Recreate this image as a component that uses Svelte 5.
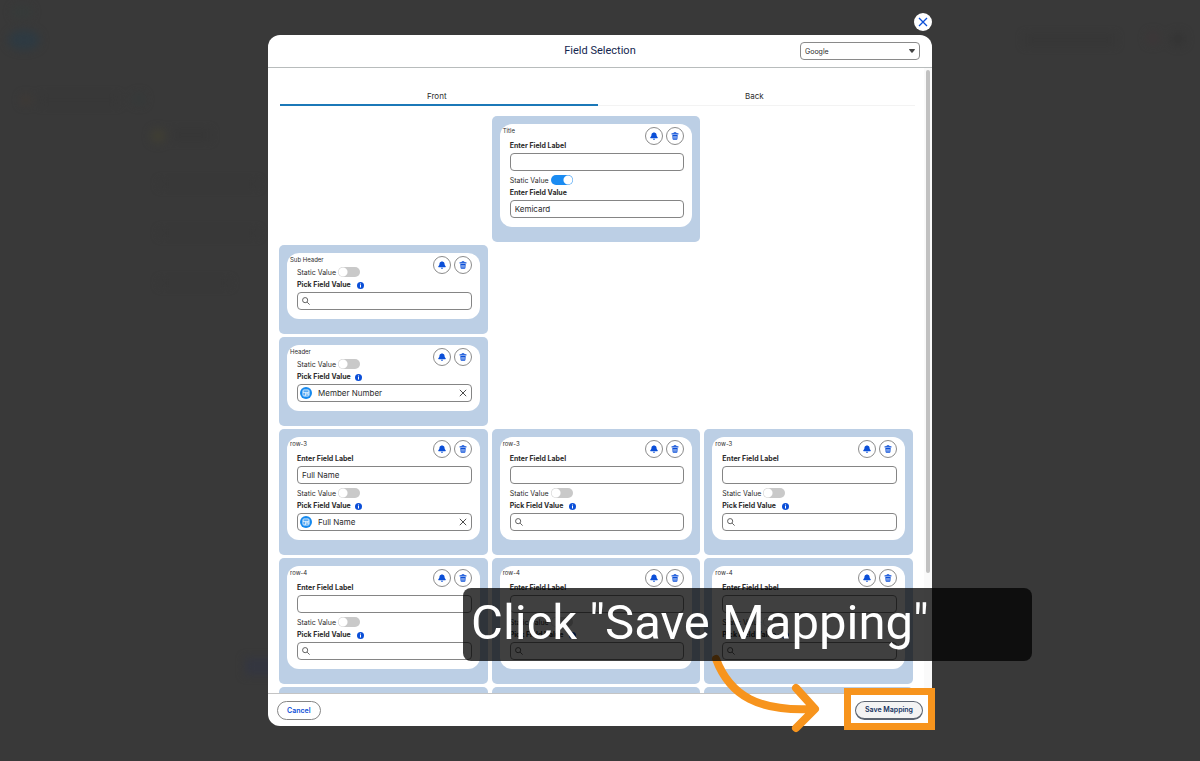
<script lang="ts">
	interface Card {
		id: string;
		tag: string;
		col: number;
		row: number;
		hasLabel: boolean;
		label?: string;
		isStatic?: boolean;
		value?: string;
	}

	const cards: Card[] = [
		{ id: 'title', tag: 'Title', col: 2, row: 1, hasLabel: true, isStatic: true, value: 'Kemicard' },
		{ id: 'sub', tag: 'Sub Header', col: 1, row: 2, hasLabel: false },
		{ id: 'header', tag: 'Header', col: 1, row: 3, hasLabel: false, value: 'Member Number' },
		{ id: 'r3a', tag: 'row-3', col: 1, row: 4, hasLabel: true, label: 'Full Name', value: 'Full Name' },
		{ id: 'r3b', tag: 'row-3', col: 2, row: 4, hasLabel: true },
		{ id: 'r3c', tag: 'row-3', col: 3, row: 4, hasLabel: true },
		{ id: 'r4a', tag: 'row-4', col: 1, row: 5, hasLabel: true },
		{ id: 'r4b', tag: 'row-4', col: 2, row: 5, hasLabel: true },
		{ id: 'r4c', tag: 'row-4', col: 3, row: 5, hasLabel: true },
		{ id: 'r5a', tag: 'row-5', col: 1, row: 6, hasLabel: true },
		{ id: 'r5b', tag: 'row-5', col: 2, row: 6, hasLabel: true },
		{ id: 'r5c', tag: 'row-5', col: 3, row: 6, hasLabel: true }
	];

	let tab = $state('front');
</script>

<div class="page">
	<!-- dimmed page behind the modal -->
	<svg class="behind" aria-hidden="true">
		<ellipse cx="24" cy="40" rx="16" ry="10" fill="#2e3a42" />
		<ellipse cx="22" cy="12" rx="10" ry="6" fill="#363b3a" />
		<circle cx="26" cy="100" r="5" fill="#403a35" />
		<rect x="40" y="95" width="78" height="10" fill="#373737" />
		<circle cx="139" cy="99" r="6" fill="#353a3a" />
		<circle cx="158" cy="136" r="7" fill="#403f33" />
		<rect x="172" y="130" width="38" height="10" fill="#363636" />
		<rect x="160" y="181" width="98" height="6" fill="#373737" />
		<rect x="160" y="230" width="98" height="6" fill="#373737" />
		<rect x="160" y="280" width="70" height="6" fill="#373737" />
		<rect x="245" y="658" width="40" height="17" fill="#343640" />
		<rect x="1025" y="35" width="90" height="10" fill="#363636" />
		<circle cx="1153" cy="38" r="6" fill="#3d3638" />
		<circle cx="1178" cy="39" r="7" fill="#343434" />
	</svg>

	<div class="modal" role="dialog" aria-labelledby="modal-title">
		<button class="close" aria-label="Close">
			<svg viewBox="0 0 10 10"><path d="M1 1l8 8M9 1l-8 8" /></svg>
		</button>

		<header class="modal-header">
			<h1 id="modal-title">Field Selection</h1>
			<div class="wallet">
				<select aria-label="Wallet">
					<option>Google</option>
					<option>Apple</option>
				</select>
				<svg viewBox="0 0 6 4"><path d="M0 .5Q0 0 .6 0H5.4Q6 0 6 .5L3.4 3.7Q3 4 2.6 3.7z" /></svg>
			</div>
		</header>

		<div class="modal-body">
			<div class="content">
				<div class="tabs" role="tablist">
					<button role="tab" aria-selected={tab === 'front'} class:active={tab === 'front'} onclick={() => (tab = 'front')}>Front</button>
					<button role="tab" aria-selected={tab === 'back'} class:active={tab === 'back'} onclick={() => (tab = 'back')}>Back</button>
				</div>

				<div class="grid">
					{#each cards as card (card.id)}
						<section class="card" style="grid-column: {card.col}; grid-row: {card.row};">
							<div class="panel">
								<div class="panel-head">
									<span class="tag">{card.tag}</span>
									<div class="actions">
										<button aria-label="Notify">
											<svg viewBox="0 0 14 14">
												<path d="M7 .4c.8 0 1.200.4 1.300 1C10.600 1.900 11.400 3.500 11.500 5.400c.1 2.100.8 3 1.900 3.900.6.6.2 1.500-.6 1.500H1.200c-.8 0-1.200-.9-.6-1.500C1.700 8.400 2.400 7.500 2.500 5.400 2.600 3.500 3.400 1.900 5.700 1.400 5.800.8 6.200.4 7 .4z" />
												<path d="M5.100 11.700h3.800c0 1.100-.8 1.900-1.900 1.900s-1.900-.8-1.900-1.900z" />
											</svg>
										</button>
										<button aria-label="Delete">
											<svg viewBox="0 0 14 14">
												<path d="M1 2.300h3.500V1.600C4.500.9 5 .4 5.700.4h2.600c.7 0 1.200.5 1.200 1.200v.7H13v1.900H1zM6 1.600v.7h2v-.7z" fill-rule="evenodd" />
												<path d="M2.300 5.400h9.400l-.5 6.900c-.1.800-.7 1.300-1.400 1.300H4.200c-.7 0-1.300-.5-1.400-1.300zM4.600 7v4.800h1.400v-4.800zM8 7v4.800h1.400v-4.800z" fill-rule="evenodd" />
											</svg>
										</button>
									</div>
								</div>

								{#if card.hasLabel}
									<label class="field-label first" for="{card.id}-label">Enter Field Label</label>
									<div class="box">
										<input id="{card.id}-label" type="text" value={card.label ?? ''} />
									</div>
								{/if}

								<div class="static" class:spaced={card.hasLabel}>
									<label for="{card.id}-static">Static Value</label>
									<input id="{card.id}-static" type="checkbox" role="switch" checked={card.isStatic} />
								</div>

								<div class="pick" class:filled={card.value}>
									<label class="field-label" for="{card.id}-value">
										{card.isStatic ? 'Enter Field Value' : 'Pick Field Value'}
									</label>
									{#if !card.isStatic}
										<svg class="info" viewBox="0 0 14 14">
											<circle cx="7" cy="7" r="7" />
											<path d="M6 3h2v2H6zM6 6h2v5H6z" />
										</svg>
									{/if}
								</div>
								<div class="box">
									{#if !card.isStatic && card.value}
										<svg class="entity" viewBox="0 0 22 22">
											<circle cx="11" cy="11" r="11" fill="#1589ee" />
											<path d="M5.500 7c0-.8.7-1.500 1.500-1.500h8c.8 0 1.500.7 1.500 1.500v8c0 .8-.7 1.500-1.500 1.500H7c-.8 0-1.500-.7-1.500-1.500zM5.500 9.500h11M9.500 13h7M9.500 9.500v7M13 9.500v3.500" fill="none" stroke="#fff" stroke-width="1.700" />
										</svg>
									{:else if !card.isStatic}
										<svg class="search" viewBox="0 0 14 14"><circle cx="5.500" cy="5.500" r="4.500" /><path d="M9 9l4.300 4.300" /></svg>
									{/if}
									<input id="{card.id}-value" type="text" value={card.value ?? ''} />
									{#if !card.isStatic && card.value}
										<button class="clear" aria-label="Clear">
											<svg viewBox="0 0 10 10"><path d="M1 1l8 8M9 1l-8 8" /></svg>
										</button>
									{/if}
								</div>
							</div>
						</section>
					{/each}
				</div>
			</div>
			<div class="scrollbar"><div class="thumb"></div></div>
		</div>

		<footer class="modal-footer">
			<button class="btn cancel">Cancel</button>
			<div class="target">
				<button class="btn save">Save Mapping</button>
			</div>
		</footer>

		<svg class="arrow" viewBox="0 0 112 80" aria-hidden="true">
			<path d="M5 5C19 42 48 58 103 55M85 34L104 55L85 74" />
		</svg>
		<div class="callout">Click "Save Mapping"</div>
	</div>
</div>

<style>
	:global(body) {
		margin: 0;
		background: #393939;
	}
	.page {
		position: relative;
		box-sizing: border-box;
		height: 100vh;
		padding: 35px 16px;
		overflow: hidden;
		font-family: Inter, sans-serif;
		font-size: 7px;
		color: #2b2b2b;
	}
	.behind {
		position: absolute;
		inset: 0;
		width: 100%;
		height: 100%;
		filter: blur(4px);
	}
	button,
	input,
	select {
		font: inherit;
		color: inherit;
		margin: 0;
		padding: 0;
		border: 0;
		background: none;
	}
	svg {
		display: block;
	}
	.modal {
		position: relative;
		display: flex;
		flex-direction: column;
		max-width: 664px;
		height: 100%;
		margin: 0 auto;
		background: #fff;
		border-radius: 12px;
	}
	.close {
		position: absolute;
		top: -22px;
		right: 0;
		display: grid;
		place-items: center;
		width: 18px;
		height: 18px;
		border-radius: 50%;
		background: #fff;
	}
	.close svg {
		width: 10px;
		height: 10px;
		stroke: #0b4fd8;
		stroke-width: 1.3;
	}
	.modal-header {
		display: grid;
		grid-template-columns: 1fr auto 1fr;
		align-items: center;
		height: 32px;
		padding: 0 12px;
		border-bottom: 1px solid #b8bcbc;
	}
	h1 {
		grid-column: 2;
		margin: 0;
		font-family: Roboto, sans-serif;
		font-size: 11px;
		font-weight: 400;
		line-height: 18px;
		color: #14264f;
	}
	.wallet {
		position: relative;
		justify-self: end;
		width: 120px;
	}
	.wallet select {
		display: block;
		box-sizing: border-box;
		width: 100%;
		height: 18px;
		padding: 0 4px;
		border: 1px solid #8a8a8a;
		border-radius: 4px;
		appearance: none;
	}
	.wallet svg {
		position: absolute;
		top: 7px;
		right: 5px;
		width: 6px;
		height: 4px;
		fill: #444;
	}
	.modal-body {
		display: flex;
		flex: 1;
		min-height: 0;
	}
	.content {
		flex: 1;
		padding: 18px 11px 0;
		overflow: hidden auto;
		scrollbar-width: none;
	}
	.scrollbar {
		box-sizing: border-box;
		width: 8px;
		padding: 2px;
		background: #fafafa;
	}
	.thumb {
		height: 81%;
		border-radius: 2px;
		background: #c1c1c1;
	}
	.tabs {
		display: grid;
		grid-template-columns: 1fr 1fr;
		margin: 0 -2px 10px 1px;
		box-shadow: inset 0 -1px #f3f3f3;
	}
	.tabs button {
		box-sizing: border-box;
		height: 20px;
		padding: 2px 4px 0 0;
		border-bottom: 2px solid transparent;
		font-size: 8px;
		line-height: 16px;
	}
	.tabs .active {
		border-bottom-color: #1b78b8;
	}
	.grid {
		display: grid;
		grid-template-columns: repeat(3, 1fr);
		gap: 3px 4px;
	}
	.card {
		padding: 8px 8px 15px;
		border-radius: 5px;
		background: #bccfe5;
	}
	.panel {
		padding: 0 8px 9px 10px;
		border-radius: 12px;
		background: #fff;
	}
	.panel-head {
		display: flex;
		justify-content: space-between;
		height: 13px;
		margin-left: -7px;
	}
	.tag {
		font-size: 6px;
		line-height: 14px;
	}
	.actions {
		display: flex;
		gap: 3px;
		padding-top: 3px;
	}
	.actions button {
		display: grid;
		place-items: center;
		box-sizing: border-box;
		width: 18px;
		height: 18px;
		border: 1px solid #8c8c8c;
		border-radius: 50%;
	}
	.actions svg {
		width: 8px;
		height: 8px;
		fill: #0b4fd8;
	}
	.field-label {
		display: block;
		font-weight: 700;
		line-height: 12px;
	}
	.first {
		margin-top: 3px;
	}
	.box {
		display: flex;
		align-items: center;
		box-sizing: border-box;
		height: 18px;
		margin-top: 1px;
		padding: 0 4px;
		border: 1px solid #858585;
		border-radius: 4px;
	}
	.box input {
		flex: 1;
		min-width: 0;
		font-size: 8px;
		outline: none;
	}
	.static {
		display: flex;
		align-items: center;
		gap: 2px;
		height: 12px;
	}
	.spaced {
		margin-top: 3px;
	}
	.static input {
		width: 22px;
		height: 10px;
		border-radius: 5px;
		background: radial-gradient(circle at 5px 5px, #fff 4px, transparent 5px) #c9c9c9;
		appearance: none;
	}
	.static input:checked {
		background: radial-gradient(circle at 17px 5px, #fff 4px, transparent 5px) #1b8cf2;
	}
	.pick {
		display: flex;
		align-items: center;
		gap: 6px;
		margin-top: 1px;
	}
	.pick.filled {
		gap: 4px;
	}
	.info {
		width: 7px;
		height: 7px;
		fill: #0b4fd8;
	}
	.info path {
		fill: #fff;
	}
	.search {
		width: 8px;
		height: 8px;
		fill: none;
		stroke: #555;
		stroke-width: 1.6;
	}
	.entity {
		width: 12px;
		height: 12px;
		margin: 0 6px 0 -2px;
	}
	.clear svg {
		width: 8px;
		height: 8px;
		stroke: #444;
		stroke-width: 1.2;
	}
	.modal-footer {
		display: flex;
		align-items: center;
		justify-content: space-between;
		height: 32px;
		padding: 0 9px;
		border-top: 1px solid #c4c4c4;
	}
	.btn {
		display: block;
		box-sizing: border-box;
		height: 19px;
		padding: 0 9px;
		border: 1px solid #858585;
		border-radius: 10px;
		font-weight: 600;
	}
	.cancel {
		color: #0b4fd8;
	}
	.save {
		border-color: #5c6470;
		border-bottom-width: 2px;
		background: #f3f3f3;
		color: #14325f;
	}
	.target {
		position: relative;
	}
	.target::after {
		content: '';
		position: absolute;
		inset: -13px -12px -10px -11px;
		border: 7px solid #f7941d;
		pointer-events: none;
	}
	.arrow {
		position: absolute;
		right: 109px;
		bottom: -8px;
		width: 112px;
		height: 80px;
		fill: none;
		stroke: #f7941d;
		stroke-width: 8;
		stroke-linecap: round;
		stroke-linejoin: round;
		pointer-events: none;
	}
	.callout {
		position: absolute;
		right: -100px;
		bottom: 65px;
		box-sizing: border-box;
		width: 569px;
		height: 73px;
		padding: 0 8px;
		border-radius: 8px;
		background: rgba(0, 0, 0, 0.75);
		font-family: Roboto, sans-serif;
		font-size: 49px;
		line-height: 70px;
		white-space: nowrap;
		color: #fff;
	}
</style>
